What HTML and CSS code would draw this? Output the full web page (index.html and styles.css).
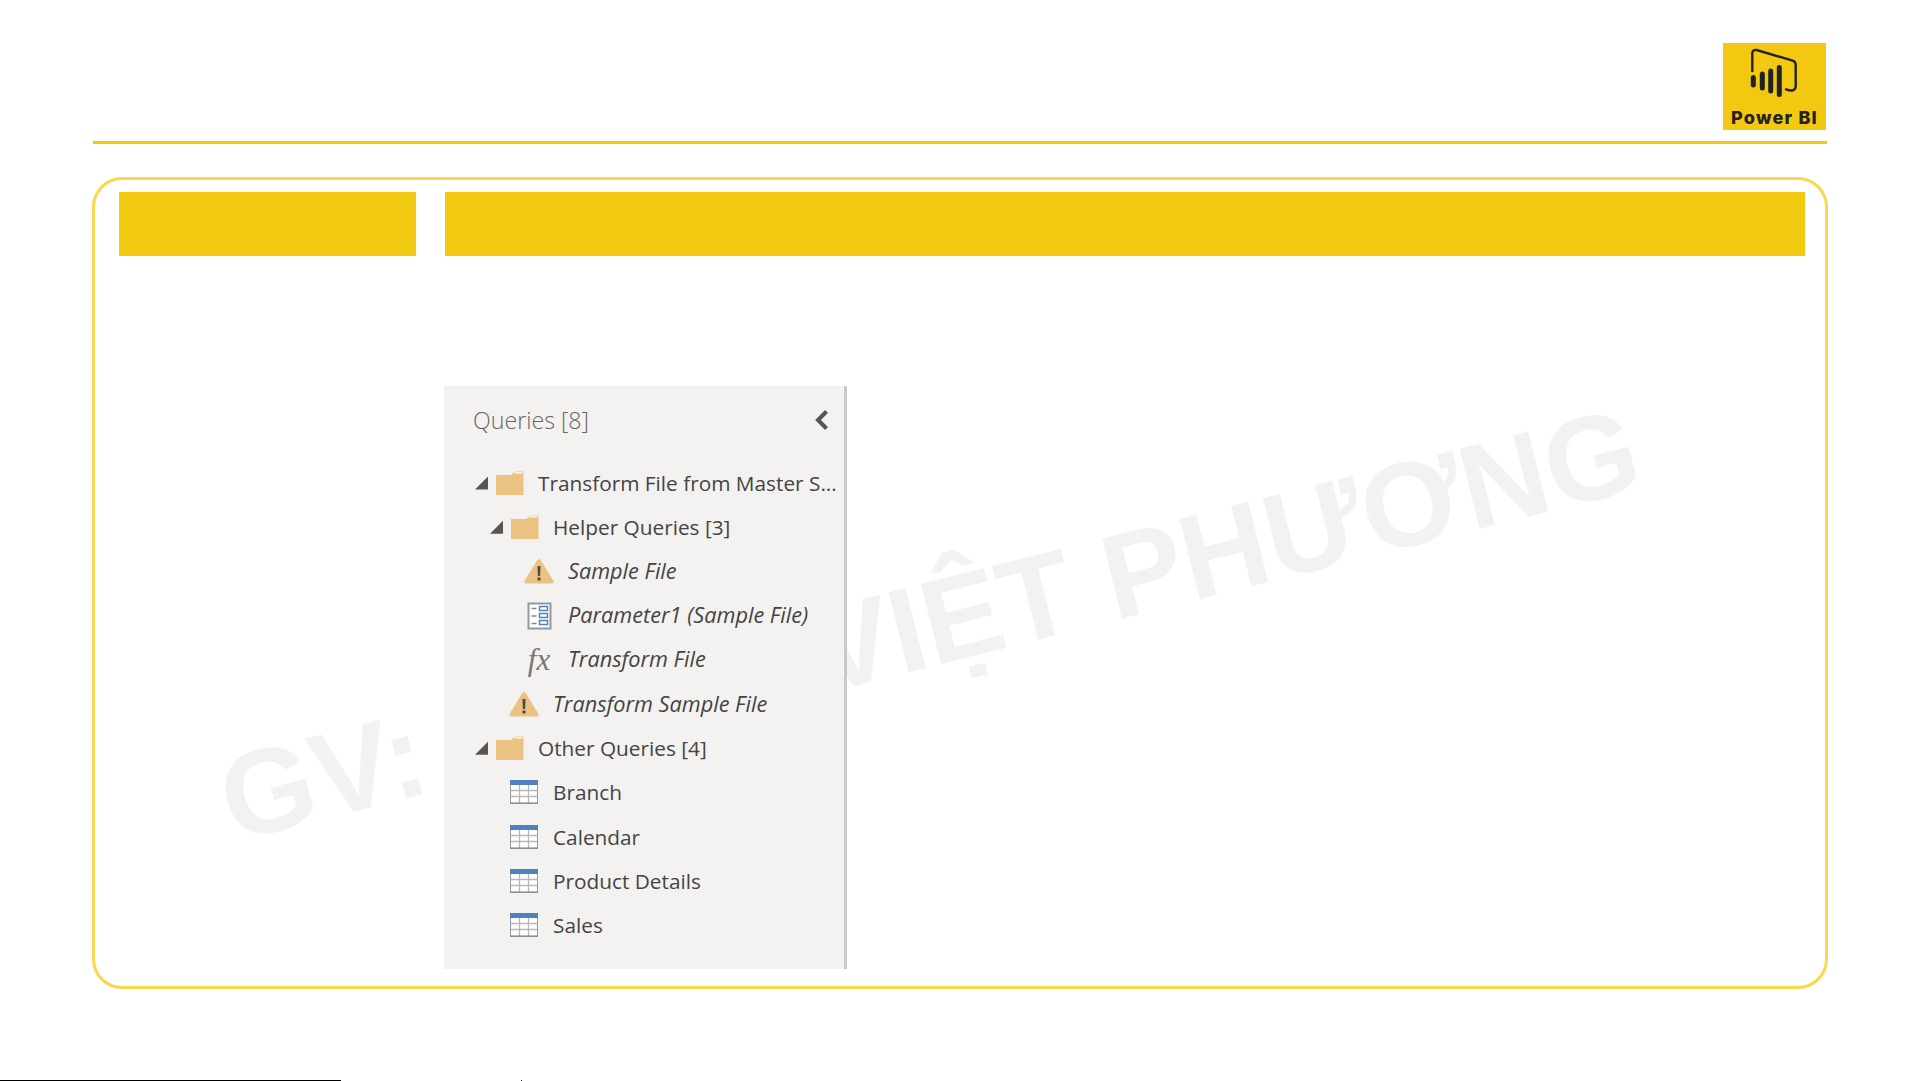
FILE: index.html
```html
<!DOCTYPE html>
<html lang="vi">
<head>
<meta charset="utf-8">
<title>Power BI - Queries</title>
<link rel="stylesheet" href="styles.css">
</head>
<body>
<div class="page">
  <div class="watermark"><span>GV:</span><span class="wm-name">VIỆT PHƯƠNG</span></div>
  <header class="top">
    <div class="logo">
      <svg class="logo-mark" viewBox="0 0 103 62" width="103" height="62">
        <path class="logo-outline" d="M29.3 28V10.5Q29.3 6.5 33.7 7L69.7 17.7Q72.7 18.8 72.7 22V43.7Q72 49.5 63 46.3"/>
        <path class="logo-bars" d="M30.3 34.5V42M39.3 31V45M47.7 28V48M56.3 24.5V51.5"/>
      </svg>
      <span class="logo-text">Power BI</span>
    </div>
  </header>
  <div class="rule"></div>
  <main class="frame">
    <div class="heads">
      <div class="head-a"></div>
      <div class="head-b"></div>
    </div>
    <section class="panel">
      <div class="panel-title">
        <span>Queries [8]</span>
        <svg class="chev" viewBox="0 0 16 22" width="16" height="22"><path d="M12.5 2.5L4 11l8.5 8.5"/></svg>
      </div>
      <ul class="tree">
        <li class="row lvl0"><i class="arrow"></i><svg class="ico" viewBox="0 0 28 24"><use href="#folder"/></svg><span class="name">Transform File from Master S...</span></li>
        <li class="row lvl1"><i class="arrow"></i><svg class="ico" viewBox="0 0 28 24"><use href="#folder"/></svg><span class="name">Helper Queries [3]</span></li>
        <li class="row lvl2 it"><i class="noarrow"></i><svg class="ico" viewBox="0 0 28 24"><use href="#warn"/></svg><span class="name">Sample File</span></li>
        <li class="row lvl2 it"><i class="noarrow"></i><svg class="ico ico-tall" viewBox="0 0 28 28"><rect x="3.500" y="1.500" width="22" height="25" fill="#fff" stroke="#979797" stroke-width="2"/><path d="M6.500 6.500h5M6.500 14h5M6.500 21.500h5" stroke="#888" stroke-width="1.500"/><path d="M14.500 4.500h8v4h-8zM14.500 11.500h8v4h-8zM14.500 18.500h8v4h-8z" fill="#fff" stroke="#4f81bd" stroke-width="1.500"/></svg><span class="name">Parameter1 (Sample File)</span></li>
        <li class="row lvl2 it"><i class="noarrow"></i><span class="ico fx">fx</span><span class="name">Transform File</span></li>
        <li class="row lvl1 it"><i class="noarrow"></i><svg class="ico" viewBox="0 0 28 24"><use href="#warn"/></svg><span class="name">Transform Sample File</span></li>
        <li class="row lvl0"><i class="arrow"></i><svg class="ico" viewBox="0 0 28 24"><use href="#folder"/></svg><span class="name">Other Queries [4]</span></li>
        <li class="row lvl1"><i class="noarrow"></i><svg class="ico" viewBox="0 0 28 24"><use href="#table"/></svg><span class="name">Branch</span></li>
        <li class="row lvl1"><i class="noarrow"></i><svg class="ico" viewBox="0 0 28 24"><use href="#table"/></svg><span class="name">Calendar</span></li>
        <li class="row lvl1"><i class="noarrow"></i><svg class="ico" viewBox="0 0 28 24"><use href="#table"/></svg><span class="name">Product Details</span></li>
        <li class="row lvl1"><i class="noarrow"></i><svg class="ico" viewBox="0 0 28 24"><use href="#table"/></svg><span class="name">Sales</span></li>
      </ul>
    </section>
  </main>
  <div class="foot"><div class="foot-line"></div><div class="foot-dot"></div></div>
  <svg class="defs" width="0" height="0">
    <symbol id="folder" viewBox="0 0 28 24">
      <path d="M0 4H15L19 0.500H27.500V24H0Z" fill="#ebc282"/>
      <path d="M17.500 2.500L19.500 1H26.500V2.500Z" fill="#fbf3e4"/>
    </symbol>
    <symbol id="warn" viewBox="0 0 28 24" overflow="visible">
      <path d="M14 0Q15 0 16 1.500L28.500 22Q29.500 24.500 27 24.500H1Q-1.500 24.500 -0.500 22L12 1.500Q13 0 14 0Z" fill="#ebc282"/>
      <path d="M12.500 7h3l-.4 10h-2.200z" fill="#4a4a4a"/><rect x="12.500" y="18.500" width="3" height="3" fill="#4a4a4a"/>
    </symbol>
    <symbol id="table" viewBox="0 0 28 24">
      <rect x="0.500" y="0.500" width="27" height="23" fill="#fff" stroke="#9a9a9a"/>
      <rect x="0" y="0" width="28" height="5" fill="#4f81bd"/>
      <path d="M1 10.500H27M1 16.500H27M9.500 5V23M18.500 5V23" stroke="#b8b8b8" stroke-width="1.300"/>
      <path d="M0 23.200H28" stroke="#8f8f8f" stroke-width="1.600"/>
    </symbol>
  </svg>
</div>
</body>
</html>
```
FILE: styles.css
```css
* { box-sizing: border-box; }
html, body { margin: 0; padding: 0; background: #fff; overflow: hidden; }
.page {
  position: relative;
  width: 1921px;
  height: 1081px;
  padding: 43px 94px 0 93px;
  display: flex;
  flex-direction: column;
  font-family: "Open Sans", "Noto Sans", sans-serif;
}
.defs { position: absolute; }
.watermark {
  position: absolute;
  left: 233px;
  top: 740px;
  display: flex;
  height: 120px;
  font: bold 120px/120px "Liberation Sans", Arial, sans-serif;
  color: #f2f2f2;
  white-space: nowrap;
  transform: rotate(-14.100deg);
  transform-origin: 0 102px;
}
.wm-name { margin-left: 402px; }
.top { display: flex; justify-content: flex-end; }
.logo {
  width: 103px;
  height: 87px;
  margin-right: 1px;
  background: #f2c811;
  display: flex;
  flex-direction: column;
  align-items: center;
}
.logo-mark { display: block; flex: none; }
.logo-outline { fill: none; stroke: #222; stroke-width: 2.4; stroke-linecap: round; }
.logo-bars { fill: none; stroke: #222; stroke-width: 5; stroke-linecap: round; }
.logo-text {
  font: 800 18px/20px Inter, "Open Sans", sans-serif;
  letter-spacing: 1.200px;
  color: #222;
  white-space: nowrap;
  margin-top: 3px;
}
.rule { height: 3px; margin-top: 11px; background: #f2c811; }
.frame {
  position: relative;
  margin: 33px -1px 0;
  height: 812px;
  border: 3px solid #f8d84e;
  border-radius: 30px;
  padding: 12px 20px 0 24px;
}
.heads { display: flex; gap: 29px; height: 64px; }
.head-a { width: 297px; background: #f1c911; }
.head-b { flex: 1; background: #f1c911; }
.panel {
  position: relative;
  width: 403px;
  height: 583px;
  margin: 130px 0 0 325px;
  background: #f3f2f1;
  border-right: 3px solid #c9c9c9;
  color: #444;
}
.panel-title {
  height: 68px;
  padding: 0 14px 0 29px;
  display: flex;
  align-items: center;
  justify-content: space-between;
  font-size: 23.200px;
  font-weight: 300;
  color: #666;
}
.chev { fill: none; stroke: #555; stroke-width: 4; }
.tree { list-style: none; margin: 7px 0 0; padding: 0; }
.row {
  height: 44.200px;
  display: flex;
  align-items: center;
  font-size: 20.800px;
  white-space: nowrap;
}
.lvl0 { padding-left: 31px; }
.lvl1 { padding-left: 46px; }
.lvl2 { padding-left: 61px; }
.it { font-style: italic; font-size: 21.700px; }
.it .name { margin-top: -2px; }
.arrow { width: 21px; flex: none; display: flex; }
.arrow::before {
  content: "";
  width: 13px;
  height: 13px;
  background: #555;
  clip-path: polygon(100% 0, 100% 100%, 0 100%);
}
.noarrow { width: 19px; flex: none; }
.ico {
  width: 28px;
  height: 24px;
  flex: none;
  overflow: visible;
}
.ico-tall { height: 28px; }
.row .noarrow + .ico { margin-left: 1px; }
.fx {
  font: italic 31px/24px "Liberation Serif", serif;
  color: #777;
  text-align: center;
}
.name { margin-left: 14px; }
.noarrow + .ico + .name { margin-left: 15px; }
.foot { position: absolute; left: 0; bottom: 0; width: 100%; height: 1px; }
.foot-line { position: absolute; left: 0; top: 0; width: 341px; height: 1px; background: #000; }
.foot-dot { position: absolute; left: 521px; top: 0; width: 1px; height: 1px; background: #00f; }
```
